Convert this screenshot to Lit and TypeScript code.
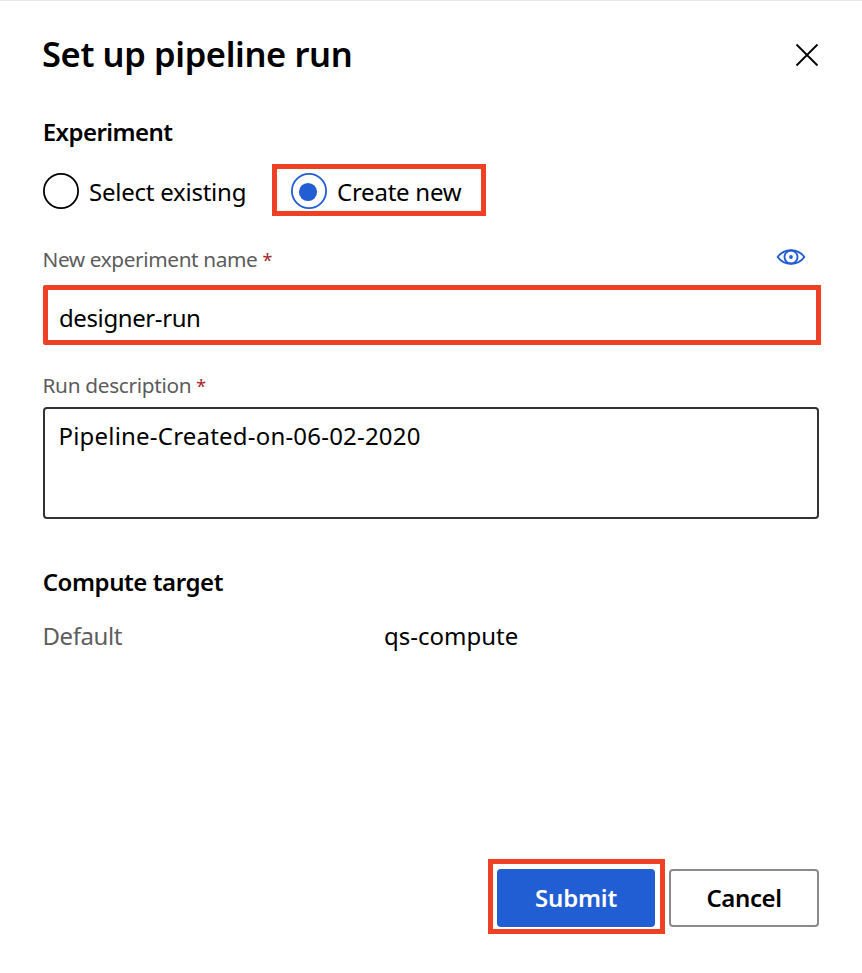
import { LitElement, html, css } from "lit";
import { customElement, state } from "lit/decorators.js";

@customElement("app-root")
export class AppRoot extends LitElement {
  static styles = css`
    :host {
      display: block;
      height: 973px;
      overflow: hidden;
      background: #fff;
      color: #000;
      font: 24px/36px "Noto Sans", "Open Sans", sans-serif;
    }
    * { box-sizing: border-box; }
    .panel {
      height: 973px;
      border-top: 1px solid #e6e6e6;
      padding: 28px 42px 39px 42px;
      display: flex;
      flex-direction: column;
      white-space: nowrap;
    }
    .header {
      display: flex;
      justify-content: space-between;
      height: 48px;
    }
    h1 { margin: 0; font-size: 34.5px; line-height: 49px; font-weight: 600; letter-spacing: -0.38px; }
    h2 { margin: 0 0 0 0.7px; font-size: 24px; line-height: 36px; font-weight: 600; letter-spacing: -0.43px; }
    .close { display: block; width: 24px; height: 24px; margin: 14px 1px 0 0; }
    .experiment { margin-top: 37px; letter-spacing: -0.55px; }
    .choices { display: flex; align-items: center; height: 52px; margin-top: 14px; }
    .choice { display: flex; align-items: center; gap: 10px; height: 52px; letter-spacing: -0.24px; cursor: pointer; }
    .choice span { padding-top: 3px; }
    .choice svg { margin-top: 1px; }
    .plain { width: 204px; }
    .marked { margin-left: 26px; width: 213.5px; border: 5px solid #ee4023; padding-left: 13px; }
    .circle { width: 36px; height: 36px; flex: none; margin-left: 1px; display: block; }
    .label {
      display: flex;
      justify-content: space-between;
      font-size: 20.8px;
      line-height: 32px;
      height: 32px;
      color: #5c5c5c;
      margin-left: 0.5px;
      letter-spacing: -0.39px;
    }
    .star { color: #a4262c; font-size: 18px; line-height: 20px; }
    .eye { display: block; width: 30px; height: 18px; margin: 5px 14px 0 0; }
    .first { margin-top: 27px; }
    .field {
      margin: 10px 0 0 1px;
      width: 777.5px;
      height: 60px;
      border: 5px solid #ee4023;
      border-radius: 2px 0 0 2px;
      padding: 10px 11px;
      letter-spacing: -0.4px;
    }
    .second { margin-top: 24px; letter-spacing: -0.32px; }
    .area {
      margin: 6px 1px 0 1px;
      height: 112px;
      border: 2px solid #333;
      border-radius: 4px;
      padding: 9px 13.5px;
      letter-spacing: 0.2px;
    }
    .compute { margin-top: 45px; }
    .row { display: grid; grid-template-columns: 342px 1fr; margin-top: 18px; }
    .muted { color: #605e5c; letter-spacing: -0.42px; padding-left: 0.5px; }
    .actions { display: flex; justify-content: flex-end; gap: 4px; margin-top: auto; height: 75px; padding-right: 1px; }
    .frame { border: 5px solid #ee4023; width: 177px; height: 75px; padding: 5px 4px; }
    button { display: block; font: inherit; font-weight: 600; height: 58px; padding: 0; border-radius: 4px; white-space: nowrap; }
    .submit { width: 158px; border: 0; background: #215dd3; color: #fff; letter-spacing: -0.2px; }
    .cancel { width: 150px; margin-top: 10px; border: 2px solid #8a8a8a; background: #fff; color: #000; letter-spacing: -0.4px; }
  `;

  @state() private mode = "new";

  private radio(on: boolean) {
    const c = on ? "#215dd3" : "#000";
    return html`<svg class="circle" viewBox="0 0 36 36">
      <circle cx="18" cy="18" r="17.1" fill="#fff" stroke=${c} stroke-width="1.8"></circle>
      <circle cx="17" cy="19" r="9.1" fill=${on ? c : "none"}></circle>
    </svg>`;
  }

  render() {
    return html`
      <div class="panel">
        <div class="header">
          <h1>Set up pipeline run</h1>
          <svg class="close" viewBox="0 0 24 24"><path d="M1.500 1.500 22.500 22.500M22.500 1.500 1.500 22.500" fill="none" stroke="#000" stroke-width="1.8"></path></svg>
        </div>
        <h2 class="experiment">Experiment</h2>
        <div class="choices">
          <div class="choice plain" @click=${() => (this.mode = "existing")}>${this.radio(this.mode === "existing")}<span>Select existing</span></div>
          <div class="choice marked" @click=${() => (this.mode = "new")}>${this.radio(this.mode === "new")}<span>Create new</span></div>
        </div>
        <div class="label first">
          <span>New experiment name <span class="star">*</span></span>
          <svg class="eye" viewBox="0 0 30 18" fill="none" stroke="#215dd3" stroke-width="1.9">
            <path d="M1.700 9C5 4.300 9.500 2.200 15 2.200S25 4.300 28.300 9C25 13.700 20.500 15.800 15 15.800S5 13.700 1.700 9Z"></path>
            <circle cx="15" cy="9" r="6.500"></circle>
            <circle cx="15" cy="9" r="1.900" fill="#215dd3" stroke="none"></circle>
          </svg>
        </div>
        <div class="field">designer-run</div>
        <div class="label second"><span>Run description <span class="star">*</span></span></div>
        <div class="area">Pipeline-Created-on-06-02-2020</div>
        <h2 class="compute">Compute target</h2>
        <div class="row"><span class="muted">Default</span><span>qs-compute</span></div>
        <div class="actions">
          <div class="frame"><button class="submit">Submit</button></div>
          <button class="cancel">Cancel</button>
        </div>
      </div>
    `;
  }
}
